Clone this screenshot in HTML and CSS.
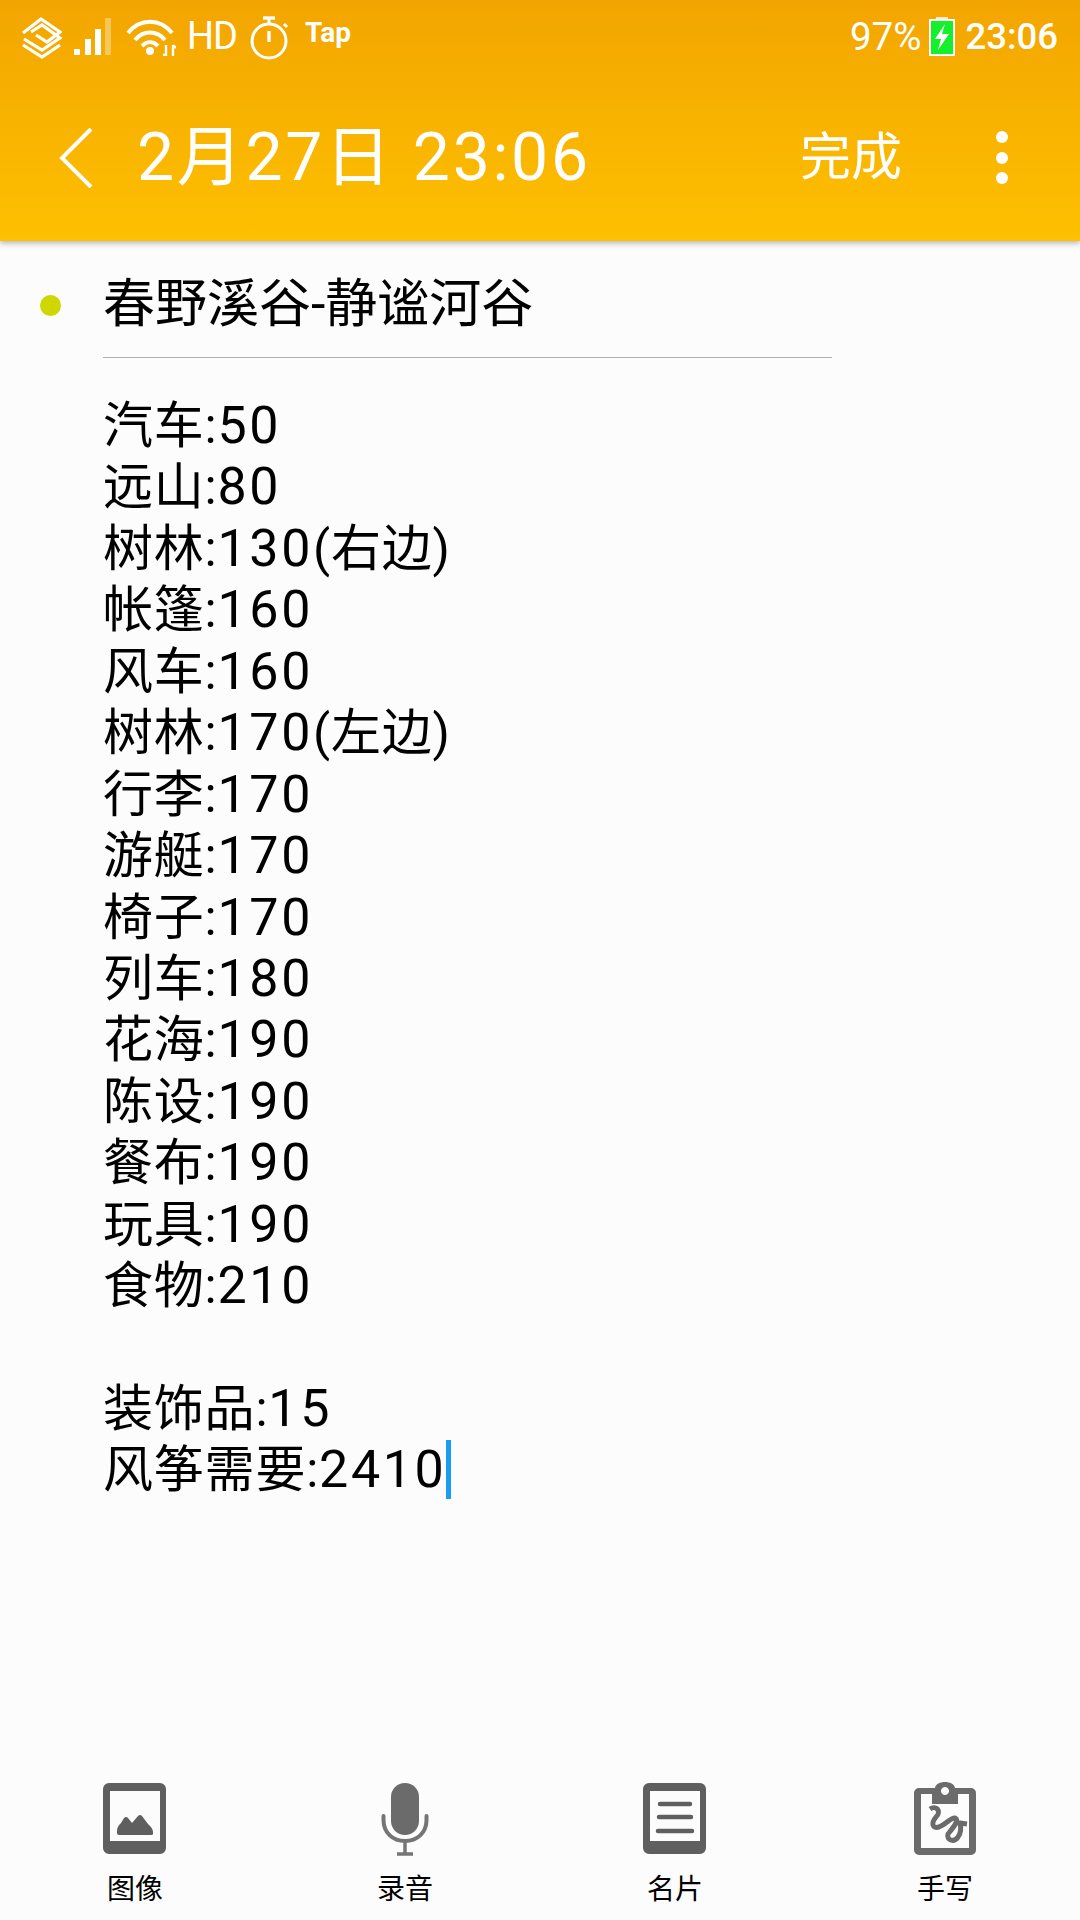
FILE: index.html
```html
<!DOCTYPE html>
<html>
<head>
    <meta charset="utf-8">
    <title>便签</title>
    <link rel="stylesheet" href="styles.css">
</head>
<body>
<div class="phone">
    <header class="top">
        <div class="status">
            <svg class="st-logo" width="40" height="42" viewBox="0 0 40 42" fill="none" stroke="#fff" stroke-width="3.2">
                <path d="M1 16 L19 2 L38 15 L25 25 L14 18"/>
                <path d="M9 15 L20 8 L38 21 L20 33 L2 22"/>
                <path d="M1 28 L20 40 L38 28"/>
            </svg>
            <svg class="st-bars" width="37" height="38" viewBox="0 0 37 38" fill="#fff">
                <rect x="0" y="31" width="6" height="6"/>
                <rect x="11" y="21" width="6" height="16"/>
                <rect x="21" y="11" width="6" height="26"/>
                <rect x="31" y="0" width="6" height="37" opacity=".35"/>
            </svg>
            <svg class="st-wifi" width="50" height="38" viewBox="0 0 50 38" fill="none" stroke="#fff" stroke-width="4">
                <path d="M2 15 C14 0 34 0 46 15"/>
                <path d="M9 22 C17 12 31 12 39 22"/>
                <path d="M16 28 C21 23 27 23 32 28"/>
                <circle cx="24" cy="33" r="4" fill="#fff" stroke="none"/>
                <path d="M40 38 V27 M37 37 H40 M47 38 V27 M47 27 L50 30" stroke-width="2.4"/>
            </svg>
            <span class="st-hd">HD</span>
            <svg class="st-timer" width="39" height="44" viewBox="0 0 39 44" fill="none" stroke="#fff" stroke-width="3">
                <circle cx="19" cy="25" r="17"/>
                <path d="M13 2 H25" stroke-width="3.4"/>
                <path d="M19 2 V8 M34 8 L37 11"/>
                <path d="M19 15 V26" stroke-width="3.4"/>
            </svg>
            <span class="st-tap">Tap</span>
            <span class="st-fill"></span>
            <span class="st-pct">97%</span>
            <svg class="st-batt" width="26" height="39" viewBox="0 0 26 39">
                <rect x="7" y="0" width="12" height="3" fill="#fff" opacity=".8"/>
                <rect x="1" y="3" width="24" height="35" fill="#14f02c" stroke="#fff" stroke-width="2"/>
                <path d="M16 7 L6 22 H12 L9 33 L20 17 H13 Z" fill="#fff"/>
            </svg>
            <span class="st-time">23:06</span>
        </div>
        <div class="toolbar">
            <svg class="back" width="34" height="60" viewBox="0 0 34 60" fill="none" stroke="#fff" stroke-width="4">
                <path d="M32 1 L3 30 L32 59"/>
            </svg>
            <span class="when">2月27日 23:06</span>
            <span class="done">完成</span>
            <span class="dots"><i></i><i></i><i></i></span>
        </div>
    </header>

    <main class="note">
        <div class="title-row">
            <span class="dot"></span>
            <div class="title">春野溪谷-静谧河谷</div>
        </div>
        <div class="lines">
            <div>汽车:<span class="num">50</span></div>
            <div>远山:<span class="num">80</span></div>
            <div>树林:<span class="num">130</span>(右边)</div>
            <div>帐篷:<span class="num">160</span></div>
            <div>风车:<span class="num">160</span></div>
            <div>树林:<span class="num">170</span>(左边)</div>
            <div>行李:<span class="num">170</span></div>
            <div>游艇:<span class="num">170</span></div>
            <div>椅子:<span class="num">170</span></div>
            <div>列车:<span class="num">180</span></div>
            <div>花海:<span class="num">190</span></div>
            <div>陈设:<span class="num">190</span></div>
            <div>餐布:<span class="num">190</span></div>
            <div>玩具:<span class="num">190</span></div>
            <div>食物:<span class="num">210</span></div>
            <div>&nbsp;</div>
            <div>装饰品:<span class="num">15</span></div>
            <div>风筝需要:<span class="num">2410</span><span class="caret"></span></div>
        </div>
    </main>

    <footer class="tools">
        <div class="tool">
            <svg width="80" height="76" viewBox="0 0 80 76">
                <path fill-rule="evenodd" fill="#5f5f5f" d="M14 2 H65 a6 6 0 0 1 6 6 V67 a6 6 0 0 1 -6 6 H14 a6 6 0 0 1 -6 -6 V8 a6 6 0 0 1 6 -6 Z M15 10 V60 H65 V10 Z"/>
                <path fill="#5f5f5f" d="M22 50 C22 46 24 44 26 42 L29 37 Q31 35 33 37 L37 42 L43 35 Q45 33 47 35 L53 43 C56 46 58 48 58 51 V53 Q58 54 56 54 H24 Q22 54 22 52 Z"/>
            </svg>
            <span>图像</span>
        </div>
        <div class="tool">
            <svg width="80" height="76" viewBox="0 0 80 76">
                <rect x="26" y="2" width="28" height="52" rx="14" fill="#6b6b6b"/>
                <path d="M18.500 35 V39 C18.500 52 28 60 40 60 C52 60 61.500 52 61.500 39 V35" fill="none" stroke="#757575" stroke-width="4" stroke-linecap="round"/>
                <path d="M40 60 V72 M32 73 H48" fill="none" stroke="#757575" stroke-width="3.500"/>
            </svg>
            <span>录音</span>
        </div>
        <div class="tool">
            <svg width="80" height="76" viewBox="0 0 80 76">
                <path fill-rule="evenodd" fill="#5f5f5f" d="M14 2 H65 a6 6 0 0 1 6 6 V67 a6 6 0 0 1 -6 6 H14 a6 6 0 0 1 -6 -6 V8 a6 6 0 0 1 6 -6 Z M15 10 V60 H65 V10 Z"/>
                <path d="M25 23 H55 M24 36 H56 M23 50 H57" fill="none" stroke="#5f5f5f" stroke-width="4.500" stroke-linecap="round"/>
            </svg>
            <span>名片</span>
        </div>
        <div class="tool">
            <svg width="80" height="76" viewBox="0 0 80 76">
                <path fill-rule="evenodd" fill="#6b6b6b" d="M14 7 H30 C31 -1 49 -1 50 7 H66 a5 5 0 0 1 5 5 V69 a5 5 0 0 1 -5 5 H14 a5 5 0 0 1 -5 -5 V12 a5 5 0 0 1 5 -5 Z M16 13 V67 H64 V13 H53 V23 H27 V13 Z M40 6 a4 4 0 1 0 0.010 0 Z"/>
                <path d="M25 28 C31 24 37 30 31 36 C26 42 27 48 34 46 C42 43 46 36 50 37 C55 39 47 48 43 53 C41 59 49 62 53 56 C56 52 56 46 55 42 L62 43" fill="none" stroke="#6b6b6b" stroke-width="5"/>
            </svg>
            <span>手写</span>
        </div>
    </footer>
</div>
</body>
</html>
```

FILE: styles.css
```css
* {
    box-sizing: border-box;
}

html, body {
    margin: 0;
    padding: 0;
}

body {
    font-family: Roboto, "Noto Sans CJK SC", sans-serif;
}

.phone {
    width: 1080px;
    height: 1920px;
    display: flex;
    flex-direction: column;
    background: #fcfcfc;
    overflow: hidden;
}

/* barra de cima */
.top {
    height: 241px;
    background: linear-gradient(#f2a500, #fec000);
    box-shadow: 0 2px 6px rgba(0, 0, 0, .3);
    color: #fff;
    position: relative;
}

.status {
    height: 72px;
    display: flex;
    align-items: center;
    padding: 0 22px 0 22px;
}

.st-logo { margin-right: 12px; margin-top: 3px; }
.st-bars { margin-right: 15px; margin-top: 2px; }
.st-wifi { margin-right: 11px; margin-top: 2px; }
.st-hd { font-size: 38px; width: 63px; letter-spacing: -1px; }
.st-timer { margin-right: 16px; margin-top: 4px; }
.st-tap { font-size: 28px; font-weight: 700; margin-top: -8px; }
.st-fill { flex: 1; }
.st-pct { font-size: 38.500px; margin-right: 8px; }
.st-batt { margin-right: 10px; }
.st-time { font-size: 36.500px; font-weight: 500; }

.toolbar {
    height: 169px;
    display: flex;
    align-items: flex-start;
    padding: 55px 0 0 59px;
}

.back { margin-top: 1px; margin-right: 44px; }

.when {
    font-size: 66px;
    line-height: 62px;
    letter-spacing: 2.700px;
    width: 663px;
}

.done {
    font-size: 51px;
    line-height: 62px;
    width: 196px;
}

.dots {
    display: flex;
    flex-direction: column;
    gap: 8.500px;
    margin-top: 4px;
}

.dots i {
    width: 12px;
    height: 12px;
    border-radius: 50%;
    background: #fff;
}

/* nota */
.note {
    flex: 1;
    padding-left: 40px;
}

.title-row {
    display: flex;
    align-items: flex-start;
    height: 117px;
}

.dot {
    width: 21px;
    height: 21px;
    border-radius: 50%;
    background: #cfd600;
    margin: 54px 42px 0 0;
}

.title {
    width: 729px;
    height: 117px;
    line-height: 128px;
    font-size: 52px;
    color: #000;
    border-bottom: 1px solid #b0b0b0;
}

.lines {
    margin: 37px 0 0 63px;
    font-size: 50px;
    line-height: 61.450px;
    letter-spacing: 0.800px;
    color: #000;
}

.lines div {
    height: 61.450px;
}

.num {
    font-size: 52px;
    letter-spacing: 2.600px;
}

.caret {
    display: inline-block;
    width: 5px;
    height: 59px;
    background: #1a9cf0;
    vertical-align: -12px;
}

/* ferramentas */
.tools {
    height: 139px;
    display: flex;
}

.tool {
    width: 270px;
    display: flex;
    flex-direction: column;
    align-items: center;
}

.tool span {
    font-size: 28px;
    line-height: 36px;
    margin-top: 15px;
    color: #000;
}
```
